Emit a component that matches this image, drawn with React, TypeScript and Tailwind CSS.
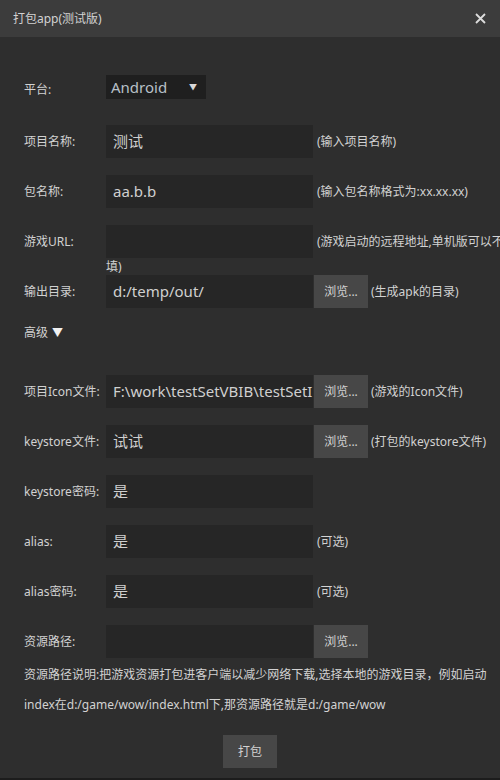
import { ReactNode } from "react";

const font = { fontFamily: '"Noto Sans", "Noto Sans CJK SC", sans-serif' };

function Label({ children }: { children: ReactNode }) {
  return <div className="w-[82px] shrink-0 text-[12px] text-[#d2d2d2]">{children}</div>;
}

function Field({ value }: { value?: string }) {
  return (
    <div className="flex h-[33px] w-[207px] shrink-0 items-center overflow-hidden whitespace-nowrap bg-[#262626] pl-[7px] text-[15px] text-[#d0d0d0]">
      {value}
    </div>
  );
}

function Browse() {
  return (
    <button className="ml-px flex h-[33px] w-[54px] shrink-0 items-center justify-center bg-[#474747] text-[12px] text-[#d2d2d2]">
      浏览...
    </button>
  );
}

function Row({
  label,
  value,
  browse,
  hint,
  className = "",
}: {
  label: string;
  value?: string;
  browse?: boolean;
  hint?: string;
  className?: string;
}) {
  return (
    <div className={`flex h-[33px] items-center ${className}`}>
      <Label>{label}</Label>
      <Field value={value} />
      {browse && <Browse />}
      {hint && (
        <span className={`whitespace-nowrap text-[12px] text-[#d2d2d2] ${browse ? "ml-[3px]" : "ml-[4px]"}`}>
          {hint}
        </span>
      )}
    </div>
  );
}

export default function App() {
  return (
    <div className="flex h-[780px] w-[500px] flex-col overflow-hidden bg-[#2e2e2e]" style={font}>
      <div className="flex h-[37px] shrink-0 items-center justify-between bg-[#3c3c3c] pl-[13px] pr-[14px]">
        <span className="text-[12px] text-[#d2d2d2]">打包app(测试版)</span>
        <svg width="11" height="11" viewBox="0 0 11 11" className="text-[#dcdcdc]">
          <path d="M1 1L10 10M10 1L1 10" stroke="currentColor" strokeWidth="1.8" />
        </svg>
      </div>

      <div className="flex flex-1 flex-col pl-[24px]">
        <div className="mt-[38px] flex h-[24px] items-center">
          <div className="w-[82px] shrink-0 pt-[5px] text-[12px] text-[#d2d2d2]">平台:</div>
          <div className="flex h-[24px] w-[100px] items-center justify-between bg-[#1f1f1f] pl-[5px] pr-[9px]">
            <span className="text-[15px] text-[#b8c0c8]">Android</span>
            <span className="text-[8px] text-[#d8d8d8]">▼</span>
          </div>
        </div>

        <Row className="mt-[26px]" label="项目名称:" value="测试" hint="(输入项目名称)" />
        <Row className="mt-[17px]" label="包名称:" value="aa.b.b" hint="(输入包名称格式为:xx.xx.xx)" />
        <Row className="mt-[17px]" label="游戏URL:" hint="(游戏启动的远程地址,单机版可以不" />
        <div className="h-[17px] pl-[82px] text-[12px] leading-[17px] text-[#d2d2d2]">填)</div>
        <Row label="输出目录:" value="d:/temp/out/" browse hint="(生成apk的目录)" />

        <div className="flex h-[50px] items-center gap-[4px] text-[12px] text-[#d2d2d2]">
          <span>高级</span>
          <span className="text-[11px] text-[#f0f0f0]">▼</span>
        </div>

        <Row className="mt-[17px]" label="项目Icon文件:" value="F:\work\testSetVBIB\testSetIB" browse hint="(游戏的Icon文件)" />
        <Row className="mt-[17px]" label="keystore文件:" value="试试" browse hint="(打包的keystore文件)" />
        <Row className="mt-[17px]" label="keystore密码:" value="是" />
        <Row className="mt-[17px]" label="alias:" value="是" hint="(可选)" />
        <Row className="mt-[17px]" label="alias密码:" value="是" hint="(可选)" />
        <Row className="mt-[17px]" label="资源路径:" browse />

        <div className="mt-[2px] whitespace-nowrap text-[12px] leading-[30px] text-[#d2d2d2]">
          资源路径说明:把游戏资源打包进客户端以减少网络下载,选择本地的游戏目录，例如启动
        </div>
        <div className="whitespace-nowrap text-[12px] leading-[30px] text-[#d2d2d2]">
          index在d:/game/wow/index.html下,那资源路径就是d:/game/wow
        </div>

        <div className="mt-[15px] flex justify-center pr-[24px]">
          <button className="h-[33px] w-[54px] bg-[#474747] text-[12px] text-[#d2d2d2]">打包</button>
        </div>
      </div>
      <div className="h-[2px] shrink-0 bg-[#1c1c1c]" />
    </div>
  );
}
